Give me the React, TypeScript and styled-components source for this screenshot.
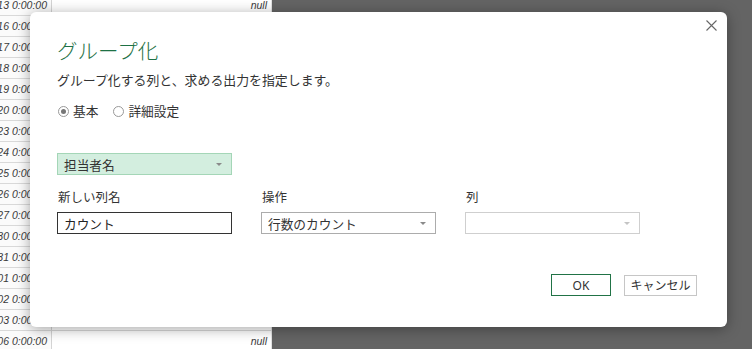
import React from 'react';
import styled, { createGlobalStyle } from 'styled-components';

const GlobalStyle = createGlobalStyle`
  html, body {
    margin: 0;
    padding: 0;
    background: #646464;
  }
  body {
    font-family: 'Noto Sans', 'Noto Sans CJK JP', sans-serif;
    color: #333333;
  }
`;

const Screen = styled.div`
  position: relative;
  width: 752px;
  height: 349px;
  overflow: hidden;
  background: #646464;
`;

const Sheet = styled.div`
  display: grid;
  grid-template-columns: 52px 220px;
  grid-auto-rows: 21px;
  margin-top: -5px;
  width: 272px;
  background: #ffffff;
`;

const Cell = styled.div<{ $first?: boolean }>`
  display: flex;
  align-items: center;
  justify-content: flex-end;
  overflow: hidden;
  white-space: nowrap;
  padding-right: 4px;
  box-sizing: border-box;
  border-bottom: 1px solid #d9d9d9;
  border-right: 1px solid ${(p) => (p.$first ? '#d4d4d4' : '#e2e2e2')};
  background: ${(p) => (p.$first ? '#fbfbfb' : '#ffffff')};
  font-family: 'Liberation Sans', 'Noto Sans', sans-serif;
  font-style: italic;
  font-size: 10.5px;
  color: #3a3a3a;
`;

const Dialog = styled.div`
  position: absolute;
  left: 30px;
  top: 12px;
  width: 697px;
  height: 315px;
  box-sizing: border-box;
  background: #ffffff;
  border-radius: 6px;
  box-shadow: 0 2px 14px rgba(0, 0, 0, 0.35);
  padding: 24px 30px 0 27px;
  display: flex;
  flex-direction: column;
`;

const CloseButton = styled.button`
  position: absolute;
  top: 2px;
  right: 5px;
  width: 22px;
  height: 22px;
  padding: 0;
  border: none;
  background: transparent;
  display: flex;
  align-items: center;
  justify-content: center;
`;

const Title = styled.h1`
  margin: 0;
  font-family: 'Noto Sans CJK JP', sans-serif;
  font-weight: 300;
  font-size: 20.5px;
  line-height: 28px;
  color: #1e7145;
`;

const Subtitle = styled.p`
  margin: 7px 0 0;
  font-family: 'Noto Sans CJK JP', sans-serif;
  font-size: 12.9px;
  line-height: 18px;
  color: #333333;
`;

const RadioRow = styled.div`
  display: flex;
  align-items: center;
  gap: 15px;
  margin-top: 13px;
  height: 18px;
  padding-left: 1px;
`;

const RadioOption = styled.label`
  display: flex;
  align-items: center;
  gap: 4px;
  font-family: 'Noto Sans CJK JP', sans-serif;
  font-size: 12.7px;
  line-height: 18px;
  color: #333333;
`;

const RadioDot = styled.span<{ $checked?: boolean }>`
  width: 9px;
  height: 9px;
  border-radius: 50%;
  border: 1px solid #999999;
  background: #ffffff;
  display: flex;
  align-items: center;
  justify-content: center;

  &::after {
    content: '';
    width: 5px;
    height: 5px;
    border-radius: 50%;
    background: ${(p) => (p.$checked ? '#777777' : 'transparent')};
  }
`;

const Select = styled.div<{ $variant?: 'green' | 'plain' | 'disabled' }>`
  width: 175px;
  height: 22px;
  box-sizing: border-box;
  display: flex;
  align-items: center;
  justify-content: space-between;
  padding: 0 9px 0 6px;
  font-family: 'Noto Sans CJK JP', sans-serif;
  font-size: 12.7px;
  color: #333333;
  background: ${(p) => (p.$variant === 'green' ? '#d3eedf' : '#ffffff')};
  border: 1px solid
    ${(p) =>
      p.$variant === 'green' ? '#a4d6b7' : p.$variant === 'disabled' ? '#cfcfcf' : '#acacac'};
`;

const Caret = styled.span<{ $light?: boolean }>`
  width: 0;
  height: 0;
  border-left: 3px solid transparent;
  border-right: 3px solid transparent;
  border-top: 3px solid ${(p) => (p.$light ? '#c4c4c4' : '#8a8a8a')};
`;

const GroupSelect = styled.div`
  margin-top: 33px;
`;

const FieldGrid = styled.div`
  display: grid;
  grid-template-columns: 175px 175px 175px;
  column-gap: 29px;
  row-gap: 6px;
  margin-top: 13px;
`;

const FieldLabel = styled.div`
  font-family: 'Noto Sans CJK JP', sans-serif;
  font-size: 12.5px;
  line-height: 18px;
  color: #333333;
  padding-left: 1px;
`;

const TextInput = styled.div`
  width: 175px;
  height: 22px;
  box-sizing: border-box;
  border: 1px solid #333333;
  display: flex;
  align-items: center;
  padding-left: 6px;
  font-family: 'Noto Sans CJK JP', sans-serif;
  font-size: 12.7px;
  color: #222222;
`;

const Footer = styled.div`
  display: flex;
  justify-content: flex-end;
  align-items: center;
  gap: 13px;
  margin-top: 40px;
`;

const Button = styled.button<{ $primary?: boolean }>`
  height: ${(p) => (p.$primary ? '22px' : '21px')};
  width: ${(p) => (p.$primary ? '60px' : '73px')};
  padding: 0;
  background: #ffffff;
  border: ${(p) => (p.$primary ? '1.5px solid #217346' : '1px solid #c6c6c6')};
  font-family: 'Noto Sans', 'Noto Sans CJK JP', sans-serif;
  font-size: 12px;
  color: #333333;
`;

const dates = ['13', '16', '17', '18', '19', '20', '23', '24', '25', '26', '27', '30', '31', '01', '02', '03', '06'];

const App: React.FC = () => {
  return (
    <>
      <GlobalStyle />
      <Screen>
        <Sheet>
          {dates.map((d, i) => (
            <React.Fragment key={i}>
              <Cell $first>{`2023/0${i < 13 ? 1 : 2}/${d} 0:00:00`}</Cell>
              {/* rows hidden behind the dialog keep their cell but no text */}
              <Cell>{i === 0 || i === dates.length - 1 ? 'null' : ''}</Cell>
            </React.Fragment>
          ))}
        </Sheet>

        <Dialog>
          <CloseButton aria-label="閉じる">
            <svg width="11" height="11" viewBox="0 0 11 11">
              <path d="M0.5 0.5 L10.5 10.5 M10.5 0.5 L0.5 10.5" stroke="#666" strokeWidth="1.1" fill="none" />
            </svg>
          </CloseButton>

          <Title>グループ化</Title>
          <Subtitle>グループ化する列と、求める出力を指定します。</Subtitle>

          <RadioRow>
            <RadioOption>
              <RadioDot $checked />
              基本
            </RadioOption>
            <RadioOption>
              <RadioDot />
              詳細設定
            </RadioOption>
          </RadioRow>

          <GroupSelect>
            <Select $variant="green">
              担当者名
              <Caret />
            </Select>
          </GroupSelect>

          <FieldGrid>
            <FieldLabel>新しい列名</FieldLabel>
            <FieldLabel>操作</FieldLabel>
            <FieldLabel>列</FieldLabel>
            <TextInput>カウント</TextInput>
            <Select $variant="plain">
              行数のカウント
              <Caret />
            </Select>
            <Select $variant="disabled">
              <span />
              <Caret $light />
            </Select>
          </FieldGrid>

          <Footer>
            <Button $primary>OK</Button>
            <Button>キャンセル</Button>
          </Footer>
        </Dialog>
      </Screen>
    </>
  );
};

export default App;
